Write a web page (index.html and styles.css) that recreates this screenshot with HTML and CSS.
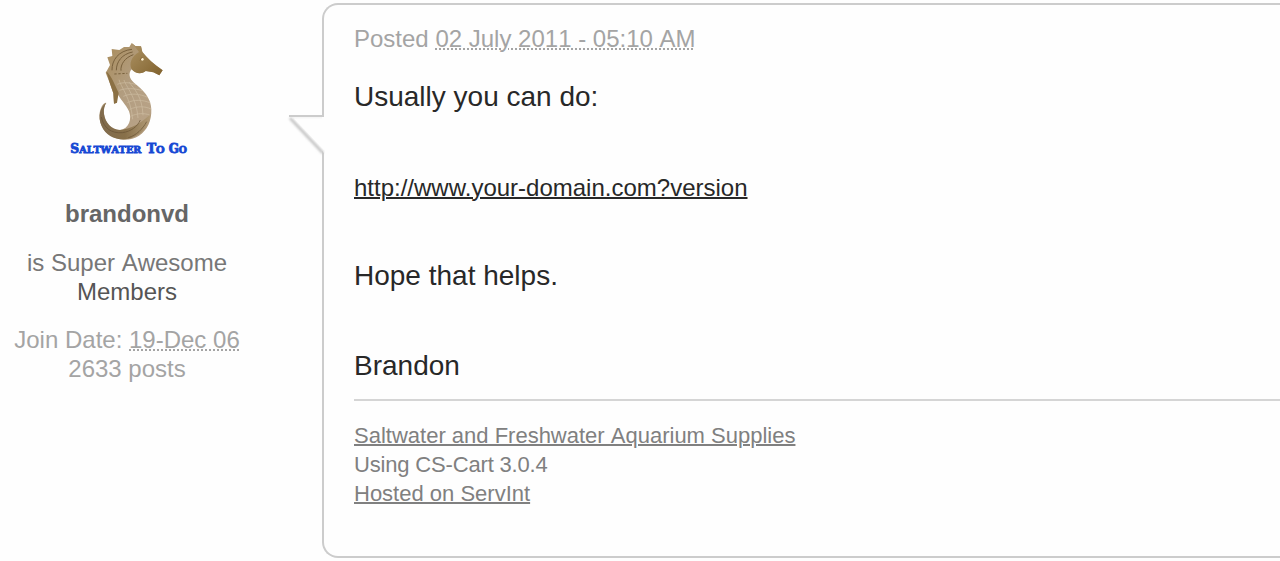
FILE: index.html
```html
<!DOCTYPE html>
<html lang="en">
<head>
<meta charset="utf-8">
<title>Forum post</title>
<link rel="stylesheet" href="styles.css">
</head>
<body>
<article class="post">
  <aside class="author">
    <svg class="avatar" viewBox="21 15 360 360" role="img" aria-label="Saltwater To Go">
      <defs>
        <linearGradient id="skin" x1="0" y1="0" x2="1" y2="1">
          <stop offset="0" stop-color="#a88a56"/>
          <stop offset=".45" stop-color="#b29d80"/>
          <stop offset=".75" stop-color="#b8a286"/>
          <stop offset="1" stop-color="#8d7348"/>
        </linearGradient>
        <linearGradient id="tail" x1="0" y1="0" x2="1" y2="0">
          <stop offset="0" stop-color="#806b4d"/>
          <stop offset=".5" stop-color="#887049"/>
          <stop offset="1" stop-color="#b39c78"/>
        </linearGradient>
        <linearGradient id="head" x1="0" y1="0" x2="1" y2="1">
          <stop offset="0" stop-color="#ad9365"/>
          <stop offset="1" stop-color="#80612c"/>
        </linearGradient>
      </defs>
      <path fill="url(#skin)" d="M139 125 L150 105 L142 82 L157 78 L155 57 L178 60 L192 51 L208 51 L215 39 L226 48 L243 49 L247 66 C261 84 282 103 308 121 L298 136 L280 127 L257 123 C247 132 230 133 215 118 C204 130 208 147 222 158 C249 180 273 202 274 238 C275 272 262 301 237 317 C210 335 171 332 145 313 C120 295 113 260 122 237 C127 222 136 216 139 219 C134 225 130 238 132 253 C136 282 155 302 179 300 C208 297 216 267 207 244 C198 224 178 205 170 187 L171 218 L162 221 L160 190 L149 158 L137 128 Z"/>
      <path fill="url(#tail)" d="M139 218 C121 229 112 260 125 288 C141 328 197 342 236 313 C256 299 268 275 272 252 C254 270 227 291 193 298 C160 307 136 280 132 252 C130 237 134 225 139 218Z"/>
      <path fill="url(#head)" d="M216 39 L226 48 L243 49 L247 66 C261 84 282 103 308 121 L298 136 L280 127 L257 123 C245 133 226 132 215 118 C206 101 214 79 237 66Z"/>
      <path fill="#8b7044" d="M139 124 C154 137 167 170 176 189 L171 218 L162 221 L160 190 L149 158Z"/>
      <g fill="none" stroke="#79613d" stroke-width="3">
        <path d="M156 121 C155 91 175 62 216 58"/>
        <path d="M169 121 C169 95 186 72 218 66"/>
        <path d="M183 122 C181 104 194 83 220 74"/>
        <path d="M163 132 L202 130" stroke-dasharray="7 5"/>
      </g>
      <g fill="none" stroke="#d4c4aa" stroke-width="2.5" opacity=".65">
        <path d="M172 163 C190 155 212 158 228 164"/>
        <path d="M178 181 C199 174 221 174 247 182"/>
        <path d="M190 199 C212 189 239 191 263 202"/>
        <path d="M202 218 C223 208 248 209 272 219"/>
        <path d="M209 238 C232 228 254 228 273 237"/>
        <path d="M211 259 C233 249 252 249 269 255"/>
        <path d="M177 149 C181 168 213 205 218 268"/>
        <path d="M192 150 C198 170 229 201 234 264"/>
        <path d="M207 156 C222 176 247 199 249 256"/>
      </g>
      <g fill="none" stroke="#695335" stroke-width="3" opacity=".7">
        <path d="M124 261 C131 295 155 311 187 308 C214 304 232 290 241 270"/>
        <path d="M205 323 C229 316 248 297 260 275"/>
      </g>
      <circle cx="247" cy="88" r="4" fill="#fff2d3"/>
      <path d="M240 91 L246 82" stroke="#77562d" stroke-width="2"/>
      <g class="logo-text">
        <text x="31" y="370" textLength="213" lengthAdjust="spacingAndGlyphs"><tspan class="cap">S</tspan>ALTWATER</text>
        <text x="260" y="370" textLength="54" lengthAdjust="spacingAndGlyphs"><tspan class="cap">T</tspan>O</text>
        <text x="326" y="370" textLength="55" lengthAdjust="spacingAndGlyphs"><tspan class="cap">G</tspan>O</text>
      </g>
    </svg>
    <div class="name">brandonvd</div>
    <div class="rank">is Super Awesome<div class="group">Members</div></div>
    <div class="stats">Join Date: <abbr>19-Dec 06</abbr><br>2633 posts</div>
  </aside>
  <section class="bubble">
    <svg class="pointer" viewBox="0 0 39 54" aria-hidden="true">
      <defs><filter id="soft" x="-20%" y="-20%" width="140%" height="140%"><feGaussianBlur stdDeviation="1"/></filter></defs>
      <path d="M4 8 L38 8 L38 44Z" fill="#fefefe"/>
      <path d="M4 9 L37 44" stroke="#c7c7c7" stroke-width="3" filter="url(#soft)"/>
      <path d="M3 7 H38" stroke="#ccc" stroke-width="2"/>
      <path d="M6 9 H36" stroke="#eee" stroke-width="1"/>
      <path d="M8 9.5 H38 V41Z" fill="#fefefe"/>
    </svg>
    <div class="posted">Posted <abbr>02 July 2011 - 05:10 AM</abbr></div>
    <div class="message">
      <p>Usually you can do:</p>
      <p><a class="url">http://www.your-domain.com?version</a></p>
      <p>Hope that helps.</p>
      <p>Brandon</p>
    </div>
    <div class="signature"><a>Saltwater and Freshwater Aquarium Supplies</a><br><span class="version">Using CS-Cart 3.0.4</span><br><a>Hosted on ServInt</a></div>
  </section>
</article>
</body>
</html>
```
FILE: styles.css
```css
* { box-sizing: border-box; }
body {
  margin: 0;
  overflow: hidden;
  background: #fefefe;
  font: 24px/29px "Liberation Sans", Arial, sans-serif;
  font-kerning: none;
}
.post { display: flex; gap: 68px; padding-top: 3px; height: 561px; }
.author { width: 254px; flex: none; padding-top: 32px; text-align: center; color: #777; }
.avatar { display: block; width: 120px; height: 120px; margin: 0 auto; overflow: visible; }
.logo-text { font-family: "DejaVu Serif", serif; font-size: 29px; font-weight: bold; fill: #1648d4; stroke: #1648d4; stroke-width: 2.5px; }
.cap { font-size: 37px; }
.name { margin-top: 44px; font-weight: bold; color: #666; }
.rank { margin-top: 20px; }
.group { color: #555; }
.stats { margin-top: 19px; color: #a4a4a4; }
abbr { text-decoration: underline dotted 2px; text-underline-offset: 1px; }
.bubble {
  position: relative;
  flex: 1;
  height: 555px;
  border: 2px solid #ccc;
  border-right: 0;
  border-radius: 16px 0 0 16px;
  padding: 19px 0 0 30px;
}
.pointer { position: absolute; left: -38px; top: 104px; width: 39px; height: 54px; }
.posted { color: #a4a4a4; }
.message { margin-top: 22px; font-size: 28px; line-height: 44.8px; color: #282828; }
.message p { margin: 0 0 44.8px; }
.message p:last-child { margin-bottom: 0; }
.url { font-size: 24px; line-height: 1; font-kerning: normal; }
a { text-decoration: underline 2px; text-underline-offset: 1px; }
.signature { margin-top: 10px; padding-top: 20px; border-top: 2px solid #d5d5d5; font-size: 22px; color: #808080; }
.version { letter-spacing: -0.17px; }
```
